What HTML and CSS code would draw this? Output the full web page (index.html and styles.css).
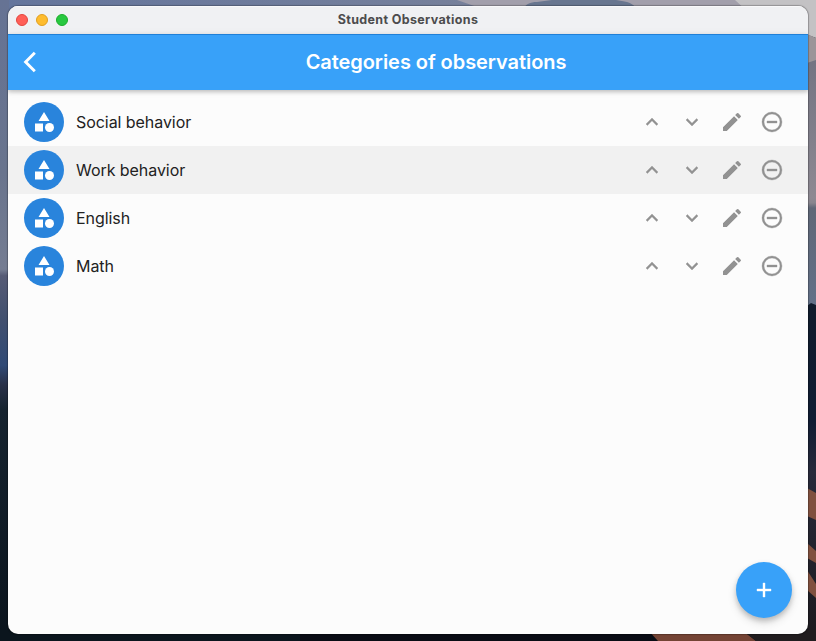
FILE: index.html
```
<!DOCTYPE html>
<html lang="en">
<head>
<meta charset="utf-8">
<title>Student Observations</title>
<link rel="stylesheet" href="styles.css">
</head>
<body>
<svg class="wallpaper" viewBox="0 0 816 641" aria-hidden="true">
  <defs>
    <linearGradient id="sky"><stop offset="0" stop-color="#64759c"/><stop offset=".5" stop-color="#747f9b"/><stop offset="1" stop-color="#8b8b99"/></linearGradient>
    <linearGradient id="left" x2="0" y2="1"><stop offset="0" stop-color="#667394"/><stop offset=".27" stop-color="#69748d"/><stop offset=".42" stop-color="#757d92"/><stop offset=".43" stop-color="#565b75"/><stop offset=".5" stop-color="#41506f"/><stop offset=".57" stop-color="#304a76"/><stop offset=".6" stop-color="#293149"/><stop offset=".64" stop-color="#16232f"/><stop offset="1" stop-color="#0b141d"/></linearGradient>
    <linearGradient id="right" x2="0" y2="1"><stop offset="0" stop-color="#727382"/><stop offset=".56" stop-color="#8d8992"/><stop offset=".58" stop-color="#88858e"/><stop offset=".6" stop-color="#5f6777"/><stop offset="1" stop-color="#637189"/></linearGradient>
    <linearGradient id="night" x2="0" y2="1"><stop offset="0" stop-color="#101b2c"/><stop offset=".35" stop-color="#101c33"/><stop offset=".5" stop-color="#272a3b"/><stop offset="1" stop-color="#1c1a1e"/></linearGradient>
  </defs>
  <path fill="url(#sky)" d="M0 0h816v20H0z"/>
  <path fill="#a29fab" d="M457 0h359v20H500l-20-12z"/>
  <path fill="#68768f" d="M522 10c4-6 8-8 15-8 30-5 70-5 90 0 8 2 10 8 12 10z"/>
  <path fill="#c3c2c4" d="M735 0h81v38l-8-3V12h-60z"/>
  <path fill="url(#left)" d="M0 0h9v641H0z"/>
  <path fill="url(#right)" d="M807 55h9v255h-9z"/>
  <path fill="#9b9599" d="M807 34l9 4v22l-9 3z"/>
  <path fill="url(#night)" d="M807 306l4-3 5 2v336h-9z"/>
  <path fill="#80503f" d="M807 488l9 5v27l-9-4zM807 543l9 8v12l-9-5zM807 570l9 14v14l-9-8z"/>
  <path fill="#0b151d" d="M0 630h300v11H0z"/>
  <path fill="#090c14" d="M300 630h360v11H300z"/>
  <path fill="#744334" d="M648 630h94l14 11h-98z"/>
  <path fill="#211d1f" d="M742 630h74v11h-60z"/>
</svg>
<svg class="sprite" aria-hidden="true">
  <symbol id="category" viewBox="0 0 24 24"><path d="M12 2l-5.5 9h11zM3 13.5h8v8H3z"/><circle cx="17.5" cy="17.5" r="4.5"/></symbol>
  <symbol id="up" viewBox="0 0 24 24"><path d="M7.41 15.41 12 10.83l4.59 4.58L18 14l-6-6-6 6z"/></symbol>
  <symbol id="down" viewBox="0 0 24 24"><path d="M7.41 8.59 12 13.17l4.59-4.58L18 10l-6 6-6-6z"/></symbol>
  <symbol id="edit" viewBox="0 0 24 24"><path d="M3 17.25V21h3.75L17.81 9.94l-3.75-3.75zM20.71 7.04a1 1 0 0 0 0-1.41l-2.34-2.34a1 1 0 0 0-1.41 0l-1.83 1.83 3.75 3.75z"/></symbol>
  <symbol id="remove" viewBox="0 0 24 24"><path d="M7 11v2h10v-2zm5-9a10 10 0 1 0 0 20 10 10 0 0 0 0-20zm0 18a8 8 0 1 1 0-16 8 8 0 0 1 0 16z"/></symbol>
</svg>
<div class="window">
  <header class="titlebar">
    <div class="lights"><i class="light red"></i><i class="light yellow"></i><i class="light green"></i></div>
    <span class="window-title">Student Observations</span>
  </header>
  <div class="appbar">
    <svg class="back" viewBox="0 0 24 24"><path d="M16.8 2.8 7.6 12l9.2 9.2"/></svg>
    <h1>Categories of observations</h1>
  </div>
  <main class="list">
    <div class="row"><span class="avatar"><svg><use href="#category"/></svg></span><span class="name">Social behavior</span><span class="actions"><svg class="bold"><use href="#up"/></svg><svg class="bold"><use href="#down"/></svg><svg><use href="#edit"/></svg><svg class="bold"><use href="#remove"/></svg></span></div>
    <div class="row hovered"><span class="avatar"><svg><use href="#category"/></svg></span><span class="name">Work behavior</span><span class="actions"><svg class="bold"><use href="#up"/></svg><svg class="bold"><use href="#down"/></svg><svg><use href="#edit"/></svg><svg class="bold"><use href="#remove"/></svg></span></div>
    <div class="row"><span class="avatar"><svg><use href="#category"/></svg></span><span class="name">English</span><span class="actions"><svg class="bold"><use href="#up"/></svg><svg class="bold"><use href="#down"/></svg><svg><use href="#edit"/></svg><svg class="bold"><use href="#remove"/></svg></span></div>
    <div class="row"><span class="avatar"><svg><use href="#category"/></svg></span><span class="name">Math</span><span class="actions"><svg class="bold"><use href="#up"/></svg><svg class="bold"><use href="#down"/></svg><svg><use href="#edit"/></svg><svg class="bold"><use href="#remove"/></svg></span></div>
  </main>
  <div class="fab"><svg class="bold" viewBox="0 0 24 24"><path d="M19 13h-6v6h-2v-6H5v-2h6V5h2v6h6z"/></svg></div>
</div>
</body>
</html>
```
FILE: styles.css
```
* { box-sizing: border-box; }
body {
  margin: 0;
  width: 816px;
  height: 641px;
  padding: 6px 8px 7px;
  overflow: hidden;
  background: #0b131c;
  font-family: Inter, "Liberation Sans", sans-serif;
}
.wallpaper { position: absolute; inset: 0; width: 816px; height: 641px; z-index: -1; }
.sprite { display: none; }
.window {
  position: relative;
  display: flex;
  flex-direction: column;
  width: 800px;
  height: 628px;
  border-radius: 10px;
  overflow: hidden;
  background: #fcfcfc;
  box-shadow: 0 0 1px 1px rgba(0, 0, 0, .25);
}
.titlebar {
  display: grid;
  grid-template-columns: 80px 1fr 80px;
  align-items: center;
  height: 28px;
  background: #f0f1f3;
  box-shadow: inset 0 1px #f9f9fa;
}
.lights { display: flex; gap: 8px; padding-left: 8px; }
.light { width: 12px; height: 12px; border-radius: 50%; border: 1px solid; }
.red { background: #ff5f57; border-color: #e2463f; }
.yellow { background: #febc2e; border-color: #e09f1f; }
.green { background: #28c840; border-color: #1dad2b; }
.window-title { text-align: center; font-size: 12.5px; font-weight: 700; line-height: 16px; letter-spacing: .36px; padding-bottom: 1px; color: #4c4c4d; }
.appbar {
  display: grid;
  grid-template-columns: 56px 1fr;
  align-items: center;
  height: 56px;
  z-index: 1;
  padding-bottom: 1px;
  background: #38a1f9;
  border-top: 1px solid #1f80d8;
  box-shadow: 0 2px 4px rgba(0, 0, 0, .2), 0 1px 8px rgba(0, 0, 0, .08);
}
.back { width: 24px; height: 24px; margin-left: 10px; fill: none; stroke: #fff; stroke-width: 2.9; }
h1 { margin: 0; padding-bottom: 1px; text-align: center; font-size: 20px; font-weight: 600; line-height: 24px; letter-spacing: -.06px; color: #fff; }
.list { padding-top: 8px; }
.row { display: flex; align-items: center; gap: 12px; height: 48px; padding: 0 24px 0 16px; }
.hovered { background: #f1f1f1; }
.avatar { display: flex; align-items: center; justify-content: center; width: 40px; height: 40px; border-radius: 50%; background: #2984dc; fill: #fff; }
.avatar svg { width: 24px; height: 24px; }
.name { font-size: 16px; line-height: 20px; letter-spacing: -.06px; color: #222; }
.actions { display: flex; gap: 16px; margin-left: auto; fill: #929292; stroke: #929292; stroke-width: 0; }
.actions svg { width: 24px; height: 24px; }
.actions .bold { stroke-width: .35; }
.fab {
  position: absolute;
  right: 16px;
  bottom: 16px;
  display: flex;
  align-items: center;
  justify-content: center;
  width: 56px;
  height: 56px;
  border-radius: 50%;
  background: #38a1f9;
  fill: #fff;
  box-shadow: 0 3px 5px rgba(0, 0, 0, .18), 0 5px 10px rgba(0, 0, 0, .12);
}
.fab svg { width: 24px; height: 24px; stroke: #fff; stroke-width: .4; }
```
